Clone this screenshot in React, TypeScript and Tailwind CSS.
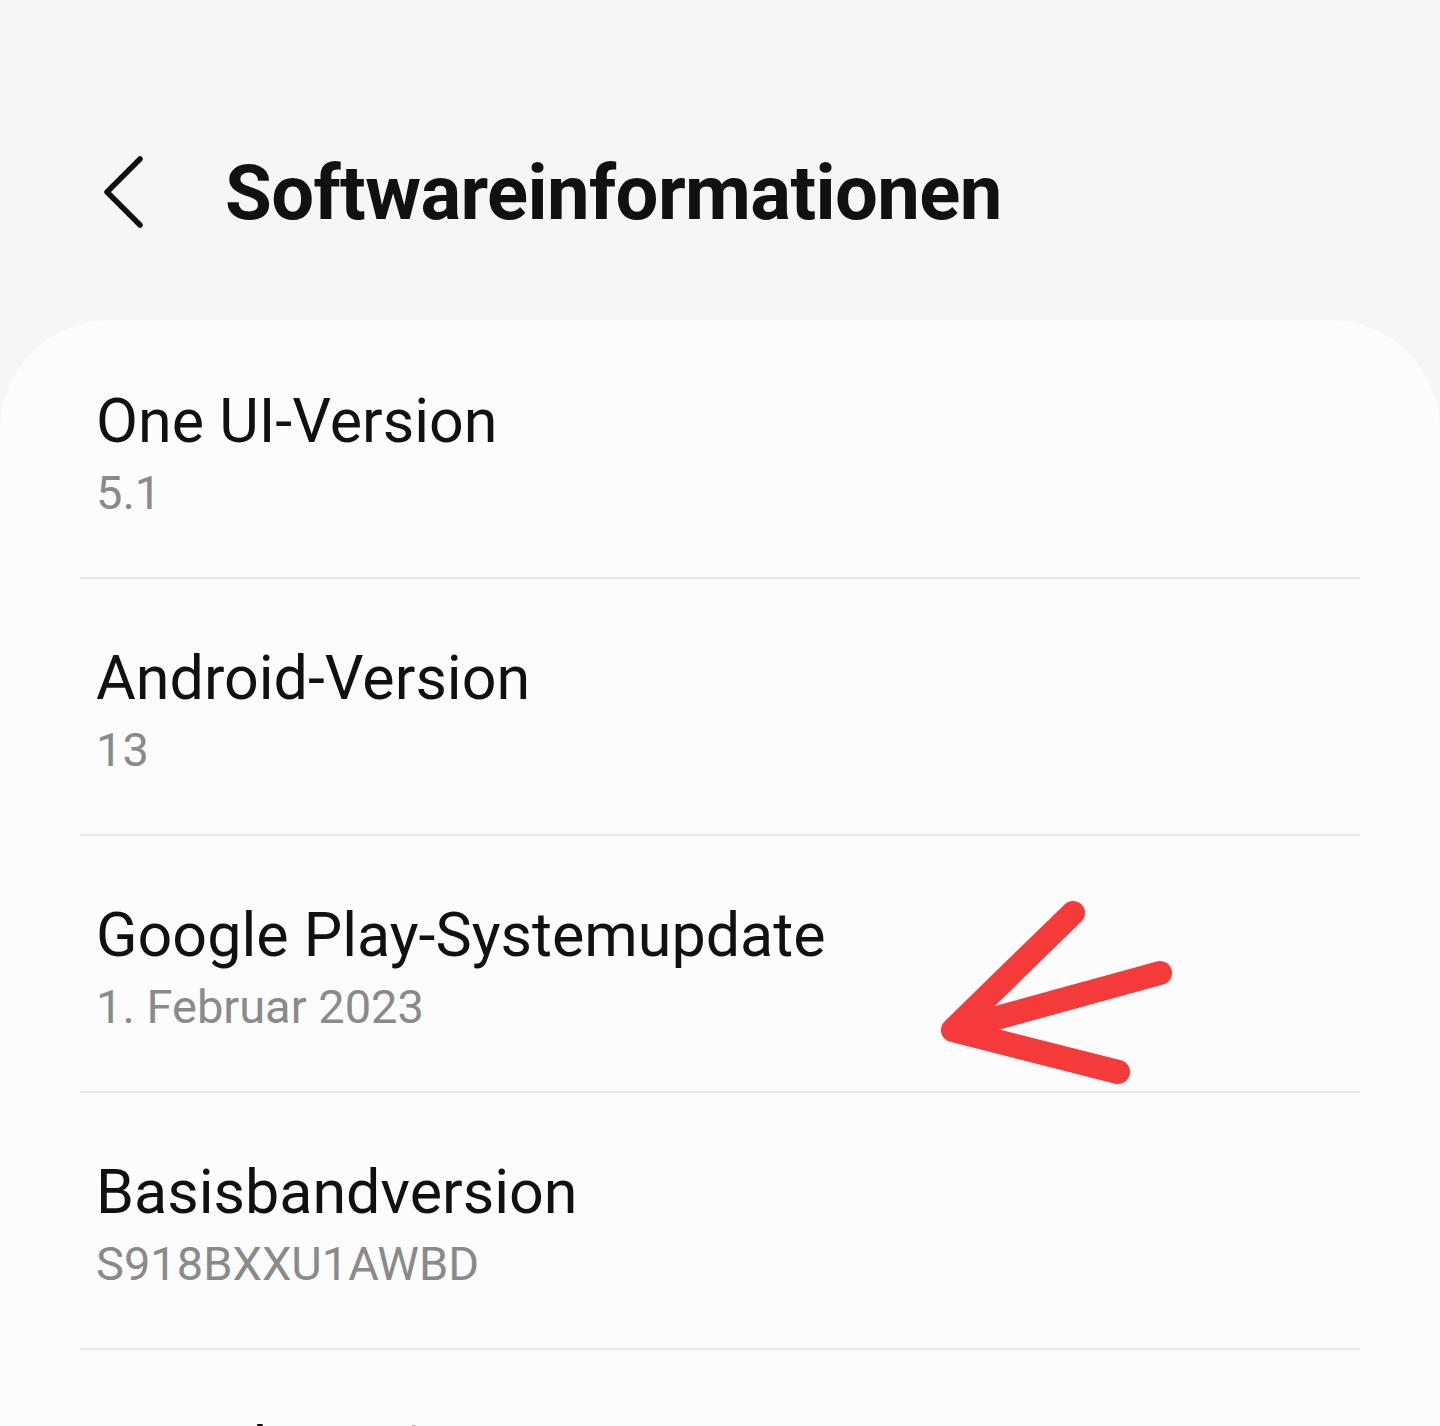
const rows = [
  { title: "One UI-Version", value: "5.1" },
  { title: "Android-Version", value: "13" },
  { title: "Google Play-Systemupdate", value: "1. Februar 2023" },
  { title: "Basisbandversion", value: "S918BXXU1AWBD" },
  { title: "Kernel-Version", value: "5.15.41-android13-8" },
]

export default function App() {
  return (
    <div className="relative h-[1426px] w-[1440px] overflow-hidden bg-[#f6f6f6] font-['Roboto',sans-serif]">
      <header className="flex h-[320px] items-start pt-[148px]">
        <div className="flex w-[225px] justify-end pr-[75px] pt-[7px]">
          <svg width="48" height="76" viewBox="0 0 48 76" fill="none">
            <path d="M38 4 L5 37 L38 70" stroke="#111" strokeWidth="5.5" strokeLinecap="round" strokeLinejoin="round" />
          </svg>
        </div>
        <h1 className="text-[76px] font-bold leading-[90px] tracking-[-0.6px] text-[#111]">Softwareinformationen</h1>
      </header>

      <div className="rounded-t-[110px] bg-[#fcfcfc] px-20 pt-[2px]">
        {rows.map((r) => (
          <div key={r.title} className="h-[257px] border-b-2 border-[#e8e8e8] pl-[16px] pt-[63px]">
            <div className="text-[61px] leading-[72px] text-[#111]">{r.title}</div>
            <div className="mt-[8px] text-[47px] leading-[55px] text-[#8a8a8a]">{r.value}</div>
          </div>
        ))}
      </div>

      <svg className="absolute left-[920px] top-[890px]" width="280" height="220" viewBox="0 0 280 220" fill="none">
        <path
          d="M153 23 L33 140 L198 182 M33 140 L240 83"
          stroke="#f53a3a"
          strokeWidth="24"
          strokeLinecap="round"
          strokeLinejoin="round"
        />
      </svg>
    </div>
  )
}
